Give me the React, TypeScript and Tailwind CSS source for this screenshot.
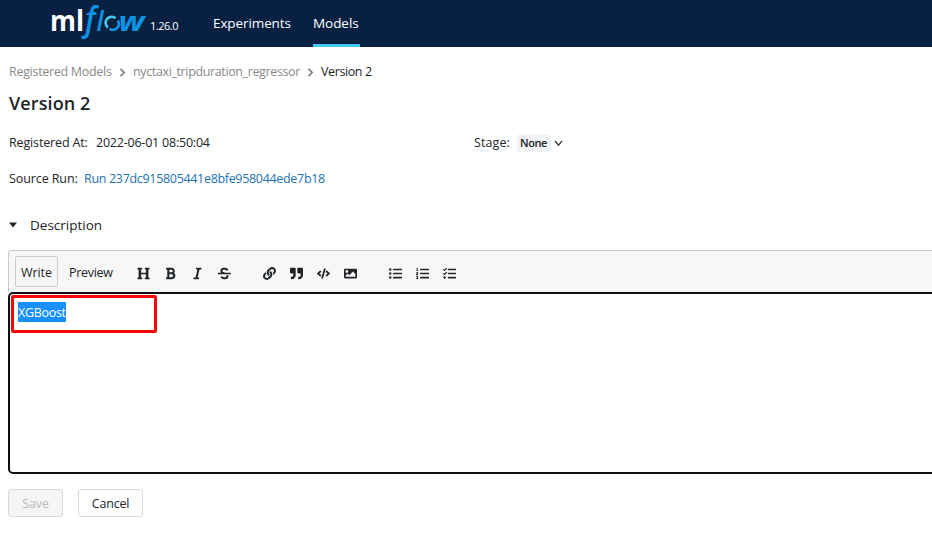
import React from 'react';
import {
  FaHeading, FaBold, FaItalic, FaStrikethrough, FaLink, FaQuoteRight,
  FaCode, FaImage, FaListUl, FaListOl, FaTasks,
} from 'react-icons/fa';

function Logo() {
  return (
    <svg width="100" height="46" viewBox="0 0 100 46" className="block overflow-visible" fontFamily="'Open Sans', sans-serif">
      <text x="-1" y="30.5" fontSize="28" fontWeight="700" fill="#fff" textLength="34" lengthAdjust="spacingAndGlyphs">ml</text>
      <g fill="#0d93e2" fontStyle="italic" fontWeight="600">
        <text transform="translate(34 30.5) scale(0.88 1)" fontSize="35">f</text>
        <text transform="translate(45.5 30.5) scale(0.95 1)" fontSize="27">l</text>
        <text x="67.5" y="30.5" fontSize="27" fontWeight="700" textLength="26" lengthAdjust="spacingAndGlyphs">w</text>
      </g>
      <g fill="none" strokeWidth="2.6">
        <path d="M56.8 27.5A6 6 0 0 1 64.5 18.2" stroke="#43c9ed" />
        <path d="M66.8 20.5A6 6 0 0 1 58.5 28.8" stroke="#0d93e2" />
      </g>
    </svg>
  );
}

function Chevron() {
  return (
    <svg width="7" height="9" viewBox="0 0 7 9" className="mt-px" fill="none" stroke="#777" strokeWidth="1.6">
      <path d="M1.5 0.8L5.2 4.5L1.5 8.2" />
    </svg>
  );
}

const groups = [
  [FaHeading, FaBold, FaItalic, FaStrikethrough],
  [FaLink, FaQuoteRight, FaCode, FaImage],
  [FaListUl, FaListOl, FaTasks],
];

export default function App() {
  return (
    <div className="h-[544px] w-[932px] overflow-hidden bg-white font-['Open_Sans','Noto_Sans',sans-serif] text-[12.5px] text-[#212529]">
      <header className="flex h-[47px] bg-[#082142] text-white">
        <div className="ml-[51px] w-[96px]"><Logo /></div>
        <span className="ml-[3px] mt-[18px] w-[63px] text-[11px] leading-4 tracking-[-0.5px]">1.26.0</span>
        <nav className="flex text-[13.5px] font-medium leading-[46px]">
          <a className="w-[100px] tracking-[-0.1px]">Experiments</a>
          <a className="h-[47px] w-[47px] border-b-3 border-[#43c9ed] tracking-[-0.05px]">Models</a>
        </nav>
      </header>

      <main className="pl-2">
        <nav className="flex h-5 items-center pl-px mt-[15px] leading-5 text-[#8a8a8a]">
          <span className="w-[110px] whitespace-nowrap tracking-[-0.3px]">Registered Models</span>
          <Chevron />
          <span className="ml-[7px] w-[174px] whitespace-nowrap tracking-[-0.37px]">nyctaxi_tripduration_regressor</span>
          <Chevron />
          <span className="ml-[7px] whitespace-nowrap tracking-[-0.4px] text-[#212529]">Version 2</span>
        </nav>
        <h1 className="mt-[7px] h-7 pl-px text-[18px] font-semibold leading-7 tracking-[0.1px]">Version 2</h1>

        <div className="mt-[16px] flex h-5 items-center pl-px">
          <span className="w-[87px] whitespace-nowrap tracking-[-0.15px]">Registered At:</span>
          <span className="w-[378px] tracking-[-0.22px]">2022-06-01 08:50:04</span>
          <span className="w-[43px] tracking-[0.1px]">Stage:</span>
          <span className="h-[18px] w-[34px] rounded bg-[#f2f3f5] pl-[3px] text-[11px] font-semibold leading-[18px] tracking-[-0.4px]">None</span>
          <svg width="9" height="7" viewBox="0 0 9 7" className="ml-[3px]" fill="none" stroke="#333" strokeWidth="1.2">
            <path d="M1 1L4.5 5.2L8 1" />
          </svg>
        </div>
        <div className="mt-4 flex h-5 items-center pl-px">
          <span className="w-[75px] whitespace-nowrap tracking-[-0.1px]">Source Run:</span>
          <a className="whitespace-nowrap tracking-[-0.32px] text-[#2272b4]">Run 237dc915805441e8bfe958044ede7b18</a>
        </div>

        <div className="mt-[24px] flex h-6 items-center">
          <svg width="10" height="6" viewBox="0 0 10 6"><path d="M1 0.5H9L5 5.5Z" fill="#212529" /></svg>
          <span className="ml-3 text-[13.5px]">Description</span>
        </div>

        <section className="mt-[13px] w-[940px]">
          <div className="flex h-[42px] items-start rounded-tl-sm border border-b-0 border-[#c8ccd0] bg-[#f7f7f7] pl-1.5 pt-[5px]">
            <button className="h-[31px] w-[43px] rounded-xs border border-[#c8ccd0] pt-[3px] tracking-[-0.1px]">Write</button>
            <button className="ml-[11px] h-[31px] w-[43px] whitespace-nowrap pt-[3px] tracking-[-0.3px]">Preview</button>
            <div className="ml-[25px] mt-[11px] flex gap-[32px]">
              {groups.map((icons, i) => (
                <div key={i} className="flex gap-[14px]">
                  {icons.map((Icon, j) => <Icon key={j} className="size-[13px]" />)}
                </div>
              ))}
            </div>
          </div>
          <div className="h-[182px] rounded-[5px] border-2 border-[#101010] bg-white pl-px pt-px">
            <div className="flex h-[38px] w-[146px] items-start rounded-xs border-3 border-[#fa0505] pl-1 pt-1">
              <span className="h-5 w-[48px] whitespace-nowrap bg-[#1890ff] leading-[21px] tracking-[-0.3px] text-white">XGBoost</span>
            </div>
          </div>
        </section>

        <div className="mt-[15px] flex gap-[15px]">
          <button className="h-[28px] w-[55px] rounded-[3px] border border-[#d9d9d9] bg-[#f5f5f5] pt-[3px] tracking-[-0.1px] text-[#b8b8b8]">Save</button>
          <button className="h-[28px] w-[65px] rounded-[3px] border border-[#d9d9d9] bg-white pt-[3px] tracking-[-0.2px]">Cancel</button>
        </div>
      </main>
    </div>
  );
}
